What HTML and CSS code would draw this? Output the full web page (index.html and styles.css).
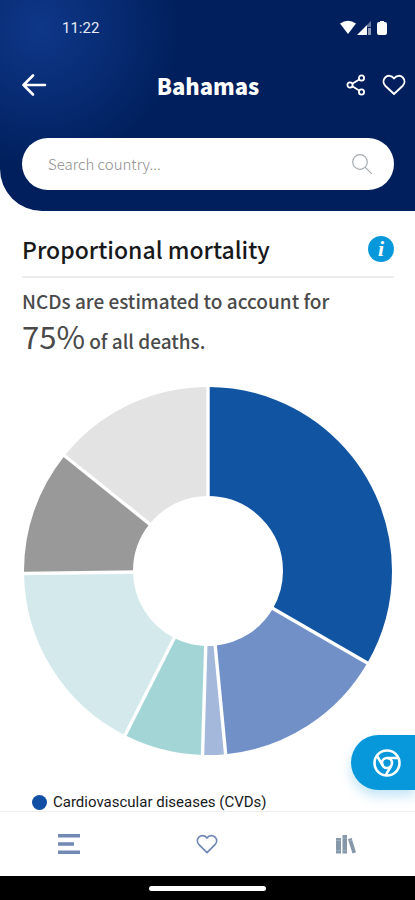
FILE: index.html
```html
<!DOCTYPE html>
<html lang="en">
<head>
<meta charset="utf-8">
<meta name="viewport" content="width=device-width, initial-scale=1">
<title>Bahamas</title>
<link rel="stylesheet" href="styles.css">
</head>
<body>
<div class="app">
  <header class="header">
    <div class="status">
      <span>11:22</span>
      <svg class="status-icons" viewBox="0 0 48 16" aria-hidden="true">
        <path d="M0 3.5Q8 -2 16 3.5L8 14Z" fill="#fff"/>
        <path d="M17 15L27 5V15Z" fill="#fff"/>
        <path d="M27 5L31 1V7H27Z" fill="#fff" opacity=".4"/>
        <path d="M28 8H31V15H28Z" fill="#fff" opacity=".55"/>
        <path d="M39 2H40V1H44V2H45Q47 2 47 4V13Q47 15 45 15H39Q37 15 37 13V4Q37 2 39 2Z" fill="#fff"/>
      </svg>
    </div>
    <div class="titlebar">
      <button class="icon-button" aria-label="Back">
        <svg width="26" height="24" viewBox="1 0 26 24" fill="none" stroke="#fff" stroke-width="2.600" stroke-linecap="round" stroke-linejoin="round"><path d="M24 12H2.500M12 2.500L2.500 12L12 21.500"/></svg>
      </button>
      <h1>Bahamas</h1>
      <div class="actions">
        <button class="icon-button" aria-label="Share">
          <svg width="20" height="22" viewBox="0 0 20 22" fill="none" stroke="#fff" stroke-width="1.800"><circle cx="4" cy="11" r="2.600"/><circle cx="15.500" cy="4" r="2.600"/><circle cx="15.500" cy="18" r="2.600"/><path d="M6.300 9.700L13.200 5.400M6.300 12.300L13.200 16.600"/></svg>
        </button>
        <button class="icon-button" aria-label="Add to favourites">
          <svg width="24" height="22" viewBox="0 0 24 22" fill="none" stroke="#fff" stroke-width="1.900" stroke-linejoin="round"><path d="M12 4.500C9.500 1 5.500 1.200 3.200 3.500C.8 6 1 9.500 3.500 12L12 20L20.500 12C23 9.500 23.200 6 20.800 3.500C18.500 1.200 14.500 1 12 4.500Z"/></svg>
        </button>
      </div>
    </div>
    <label class="search">
      <input type="text" placeholder="Search country..." aria-label="Search country">
      <svg width="20" height="20" viewBox="0 0 20 20" fill="none" stroke="#a5abb0" stroke-width="1.200" stroke-linecap="round"><circle cx="8" cy="8" r="7.300"/><path d="M13.300 13.300L19.300 19.300"/></svg>
    </label>
  </header>

  <main class="content">
    <div class="section-head">
      <h2>Proportional mortality</h2>
      <button class="info" aria-label="Information">i</button>
    </div>
    <p class="summary">NCDs are estimated to account for<br><strong>75%</strong> of all deaths.</p>
    <svg class="chart" viewBox="-184 -184 368 368" role="img" aria-label="Share of deaths by cause">
      <g class="slices" fill="none" stroke-width="109" transform="rotate(-90)">
        <circle r="129.500" pathLength="360" stroke="#1155a2" stroke-dasharray="120 240"/>
        <circle r="129.500" pathLength="360" stroke="#7190c7" stroke-dasharray="54.500 305.500" transform="rotate(120)"/>
        <circle r="129.500" pathLength="360" stroke="#a4b8dc" stroke-dasharray="7.200 352.800" transform="rotate(174.500)"/>
        <circle r="129.500" pathLength="360" stroke="#a3d5d7" stroke-dasharray="25.100 334.900" transform="rotate(181.700)"/>
        <circle r="129.500" pathLength="360" stroke="#d3e9ec" stroke-dasharray="62.400 297.600" transform="rotate(206.800)"/>
        <circle r="129.500" pathLength="360" stroke="#999" stroke-dasharray="39.600 320.400" transform="rotate(269.200)"/>
        <circle r="129.500" pathLength="360" stroke="#e3e3e3" stroke-dasharray="51.200 308.800" transform="rotate(308.800)"/>
      </g>
      <g stroke="#fff" stroke-width="3.400">
        <path d="M0 -70V-186"/>
        <path d="M0 -70V-186" transform="rotate(120)"/>
        <path d="M0 -70V-186" transform="rotate(174.500)"/>
        <path d="M0 -70V-186" transform="rotate(181.700)"/>
        <path d="M0 -70V-186" transform="rotate(206.800)"/>
        <path d="M0 -70V-186" transform="rotate(269.200)"/>
        <path d="M0 -70V-186" transform="rotate(308.800)"/>
      </g>
    </svg>
    <ul class="legend">
      <li><span class="dot"></span>Cardiovascular diseases (CVDs)</li>
    </ul>
  </main>

  <footer class="footer">
    <button class="browser-button" aria-label="Open in browser">
      <svg width="28" height="28" viewBox="0 0 28 28" fill="none" stroke="#fff" stroke-width="2.600"><circle cx="14" cy="14" r="12.500"/><circle cx="14" cy="14" r="5"/><path d="M14 9H25.300M9.700 16.500L4 6.800M18.300 16.500L12.600 26.300"/></svg>
    </button>
    <nav class="tabs">
      <a href="#data" aria-label="Data"><svg width="22" height="22" viewBox="0 0 22 22" fill="#7189b5"><path d="M0 1H22V4.500H0ZM0 9.300H16V12.700H0ZM0 17.500H22V21H0Z"/></svg></a>
      <a href="#favourites" aria-label="Favourites"><svg width="22" height="22" viewBox="0 0 24 22" fill="none" stroke="#7189b5" stroke-width="1.900" stroke-linejoin="round"><path d="M12 4.500C9.500 1 5.500 1.200 3.200 3.500C.8 6 1 9.500 3.500 12L12 20.500L20.500 12C23 9.500 23.200 6 20.800 3.500C18.500 1.200 14.500 1 12 4.500Z"/></svg></a>
      <a href="#library" aria-label="Library"><svg width="20" height="20" viewBox="0 0 20 20" fill="#8498aa"><path d="M0 4H5V19.500H0ZM6.500 1H11V19.500H6.500ZM12 5.200L15.500 3.800L20 18.200L16.500 19.500Z"/><path d="M0 6.500H5M0 16.500H5M6.500 4H11M6.500 16.500H11M12.700 7.500L16.200 6.100" stroke="#a5b4c1" stroke-width=".8"/></svg></a>
    </nav>
    <div class="system-bar"><span></span></div>
  </footer>
</div>
</body>
</html>
```
FILE: styles.css
```css
* {
  box-sizing: border-box;
}

body {
  margin: 0;
  font-family: "Noto Sans CJK SC", "Noto Sans", sans-serif;
  color: #18191b;
  background: #fff;
}

button {
  padding: 0;
  border: 0;
  background: none;
  color: inherit;
  font: inherit;
  cursor: pointer;
}

svg {
  display: block;
}

.app {
  display: flex;
  flex-direction: column;
  height: 100vh;
}

.header {
  flex: none;
  padding: 18px 21px 21px 22px;
  color: #fff;
  background: radial-gradient(circle at 40px 28px, #0e3788 0, #082c74 70px, #001f5c 140px);
  border-bottom-left-radius: 42px;
}

.status {
  display: flex;
  align-items: center;
  justify-content: space-between;
  height: 20px;
  padding: 0 6px 0 40px;
  font: 400 15px/20px Roboto, sans-serif;
  color: #e6ebf5;
}

.status-icons {
  width: 48px;
  height: 16px;
}

.titlebar {
  display: grid;
  grid-template-columns: 1fr auto 1fr;
  align-items: center;
  height: 48px;
  margin: 23px -12px 29px 0;
}

.titlebar h1 {
  margin: 0;
  padding-right: 12px;
  font-size: 22px;
  line-height: 32px;
  font-weight: 900;
}

.icon-button {
  display: block;
  justify-self: start;
}

.actions {
  display: flex;
  align-items: center;
  justify-content: flex-end;
  gap: 16px;
}

.search {
  display: flex;
  align-items: center;
  height: 52px;
  padding: 0 22px 0 26px;
  background: #fff;
  border-radius: 26px;
}

.search input {
  flex: 1;
  min-width: 0;
  padding: 0;
  border: 0;
  outline: 0;
  background: none;
  color: #333;
  font: 300 15px/24px "Noto Sans CJK SC", sans-serif;
}

.search input::placeholder {
  color: #8c8c8c;
}

.content {
  flex: 1;
  min-height: 0;
  padding: 0 21px 0 22px;
  overflow: auto;
  scrollbar-width: none;
}

.section-head {
  display: flex;
  align-items: center;
  justify-content: space-between;
  height: 67px;
  padding-top: 10px;
  border-bottom: 2px solid #ebebeb;
}

.section-head h2 {
  margin: 0;
  font-size: 23px;
  line-height: 32px;
  font-weight: 500;
}

.info {
  width: 26px;
  height: 26px;
  border-radius: 50%;
  background: #0798dc;
  color: #fff;
  font: italic 700 22px/26px "Liberation Serif", serif;
}

.summary {
  margin: 3px 0 26px;
  font-size: 19px;
  line-height: 40px;
  font-weight: 500;
  color: #4a4a4a;
}

.summary strong {
  font-size: 31px;
  line-height: 24px;
  font-weight: 400;
}

.chart {
  width: 100%;
  max-width: 368px;
  margin: 0 auto;
}

.legend {
  margin: 0;
  padding: 38px 10px 0;
  list-style: none;
  font: 400 15px/18px Roboto, sans-serif;
}

.legend li {
  display: flex;
  align-items: center;
  gap: 6px;
}

.dot {
  width: 15px;
  height: 15px;
  border-radius: 50%;
  background: #104fa4;
}

.footer {
  position: relative;
  flex: none;
}

.browser-button {
  position: absolute;
  right: 0;
  bottom: 110px;
  display: flex;
  align-items: center;
  width: 64px;
  height: 55px;
  padding-left: 22px;
  border-radius: 28px 0 0 28px;
  background: #0798dc;
  box-shadow: 0 6px 12px #0798dc40;
}

.tabs {
  display: grid;
  grid-template-columns: repeat(3, 1fr);
  height: 65px;
  border-top: 1px solid #eee;
  background: #fff;
}

.tabs a {
  display: flex;
  align-items: center;
  justify-content: center;
}

.system-bar {
  display: flex;
  align-items: center;
  justify-content: center;
  height: 24px;
  background: #000;
}

.system-bar span {
  width: 28%;
  height: 5px;
  border-radius: 3px;
  background: #fff;
}
```
